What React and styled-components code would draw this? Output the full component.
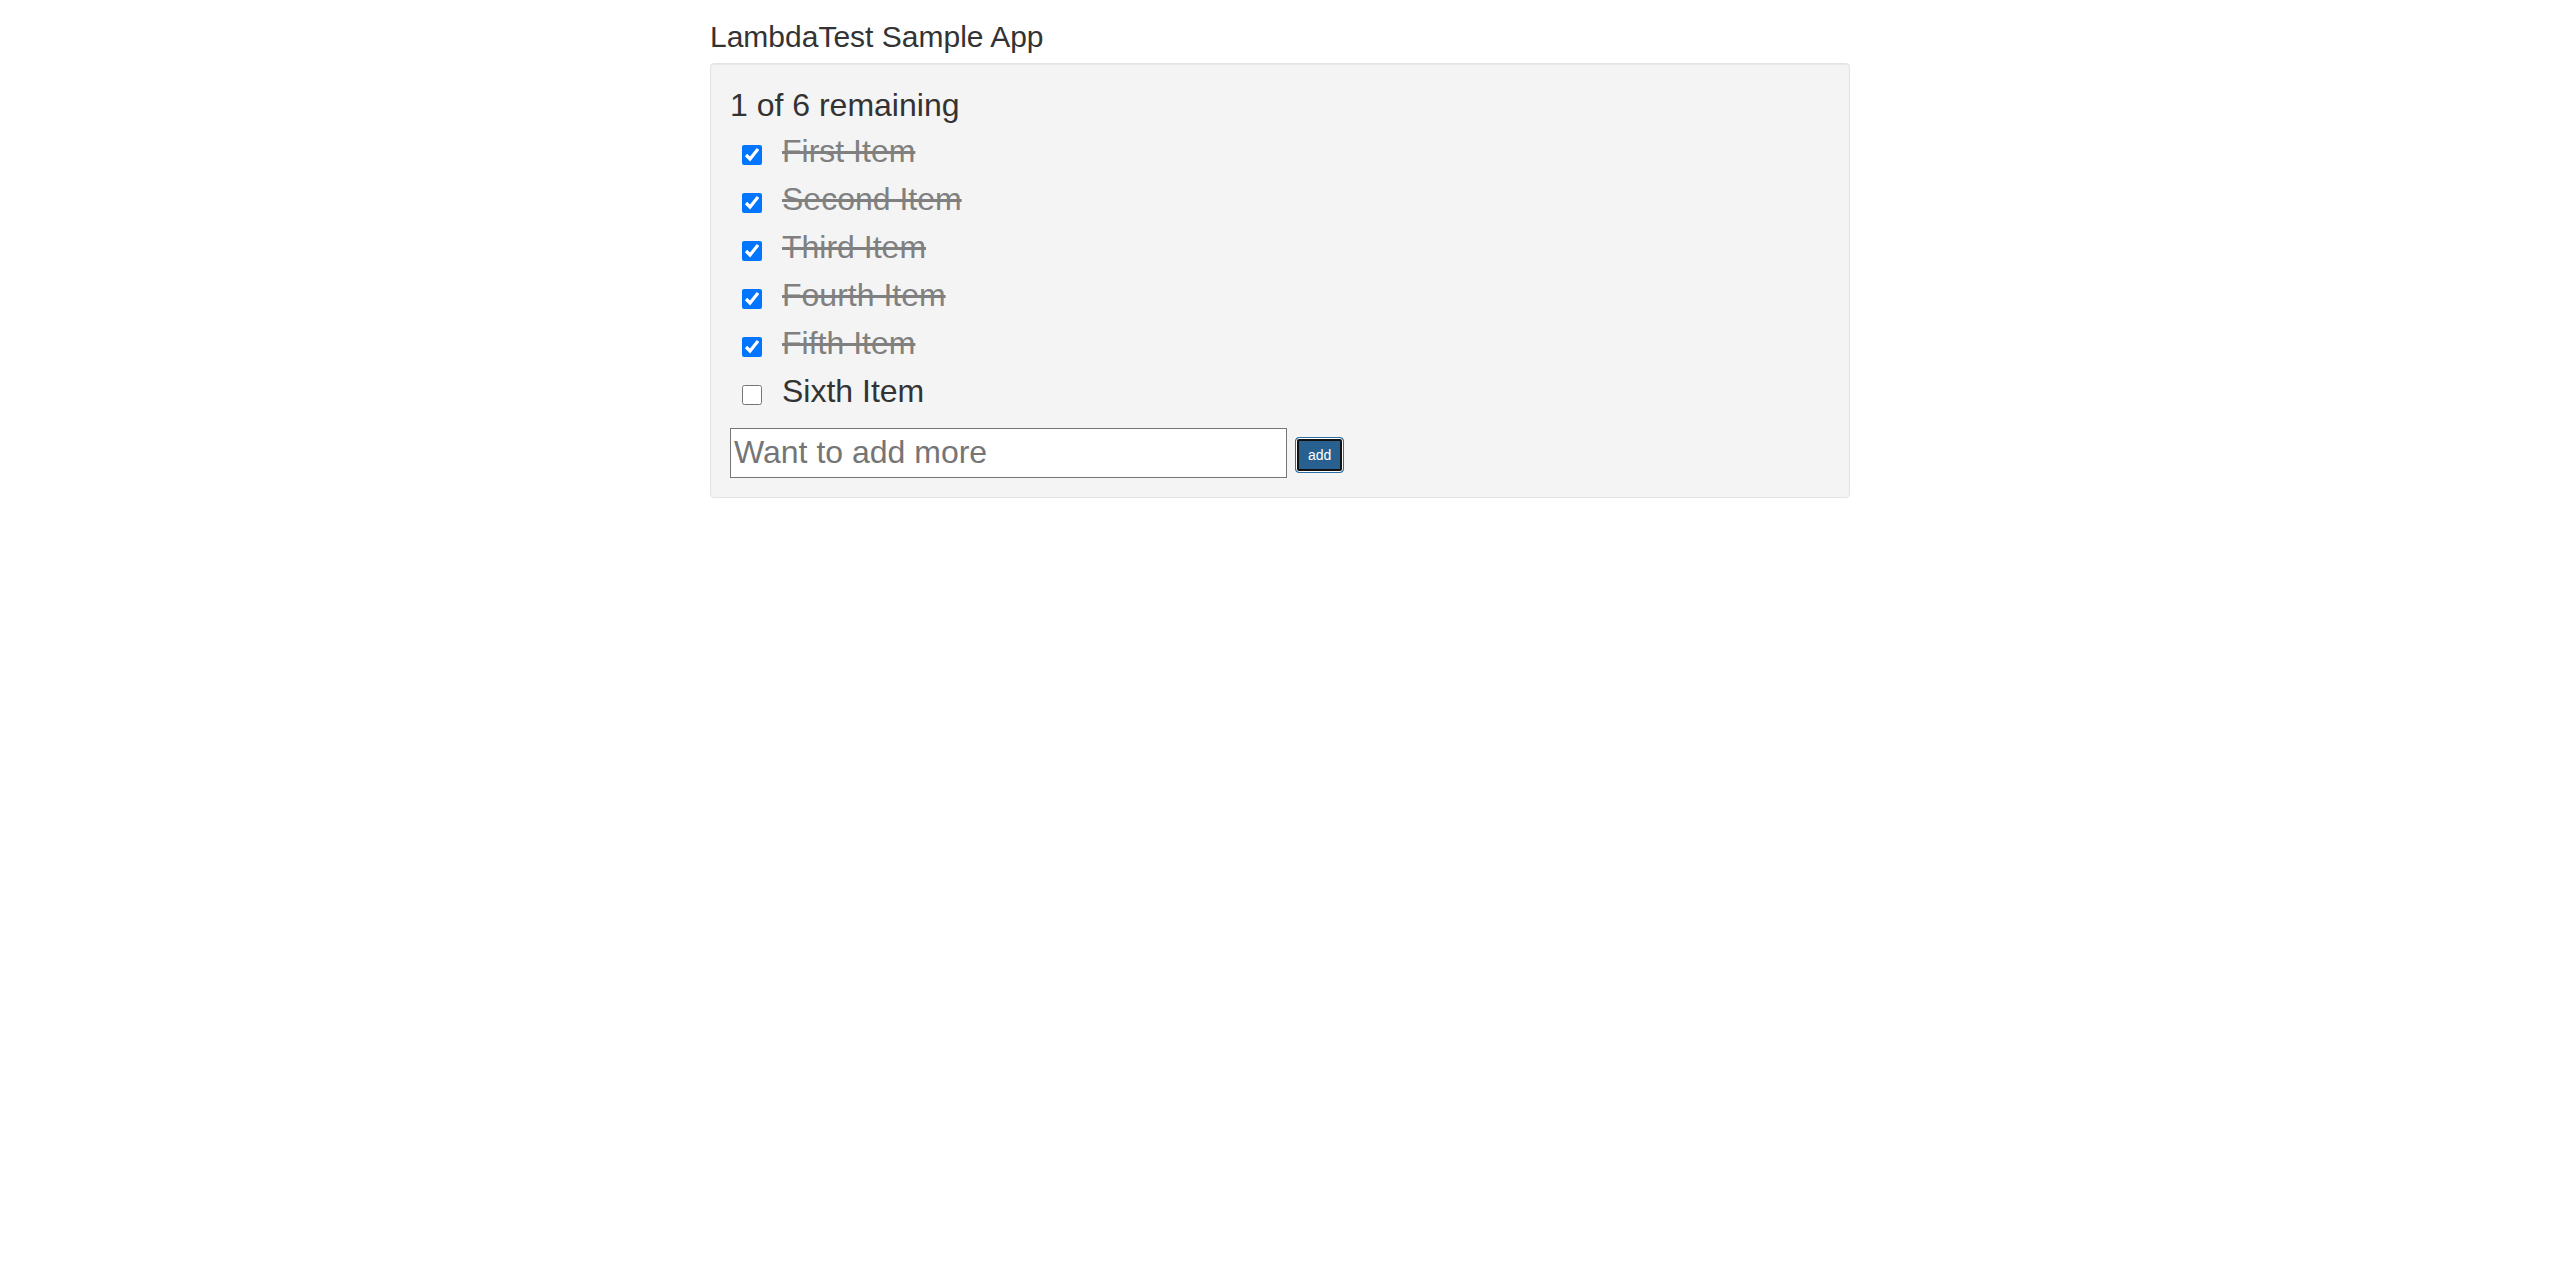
import React, { useState } from "react";
import styled, { createGlobalStyle } from "styled-components";

const GlobalStyle = createGlobalStyle`
  html, body {
    margin: 0;
    padding: 0;
    background: #ffffff;
  }
  body {
    font-family: "Liberation Sans", Arial, Helvetica, sans-serif;
    font-size: 14px;
    line-height: 1.42857143;
    color: #333333;
  }
  * {
    box-sizing: border-box;
  }
`;

const Container = styled.div`
  width: 1170px;
  padding: 0 15px;
  margin: 0 auto;
`;

const Title = styled.h2`
  margin: 20px 0 10px 0;
  font-size: 30px;
  font-weight: 500;
  line-height: 1.1;
  color: #333333;
`;

const Well = styled.div`
  min-height: 20px;
  padding: 19px;
  margin-bottom: 20px;
  background-color: #f4f4f4;
  border: 1px solid #e3e3e3;
  border-radius: 4px;
  box-shadow: inset 0 1px 1px rgba(0, 0, 0, 0.05);
`;

const Remaining = styled.div`
  font-size: 32px;
  line-height: 1.42857143;
`;

const List = styled.ul`
  list-style: none;
  margin: 0;
  padding: 0;
`;

const Row = styled.li`
  display: flex;
  align-items: center;
  height: 48px;
  font-size: 32px;
  line-height: 48px;
`;

const Check = styled.input`
  width: 20px;
  height: 20px;
  margin: 4px 20px 0 12px;
  accent-color: #0075ff;
`;

const Label = styled.span`
  padding-bottom: 3px;
  color: ${(p) => (p.$done ? "#808080" : "#333333")};
  text-decoration: ${(p) => (p.$done ? "line-through" : "none")};
`;

const Form = styled.form`
  display: flex;
  align-items: center;
  margin-top: 11px;
`;

const TextInput = styled.input`
  width: 557px;
  height: 50px;
  padding: 1px 3px;
  border: 1px solid #767676;
  border-radius: 0;
  background: #ffffff;
  font-family: "Liberation Sans", Arial, sans-serif;
  font-size: 32px;
  color: #333333;
  outline: none;

  &::placeholder {
    color: #757575;
  }
`;

const AddButton = styled.button`
  margin: 4px 0 0 8px;
  padding: 7px 12px;
  font-family: "Liberation Sans", Arial, sans-serif;
  font-size: 14px;
  line-height: 20px;
  color: #ffffff;
  background-color: #286090;
  border: 1px solid #2e6da4;
  border-radius: 4px;
  box-shadow: inset 0 0 0 1px #ffffff, inset 0 0 0 3px #111111;
  cursor: pointer;
`;

const initialTodos = [
  { text: "First Item", done: true },
  { text: "Second Item", done: true },
  { text: "Third Item", done: true },
  { text: "Fourth Item", done: true },
  { text: "Fifth Item", done: true },
  { text: "Sixth Item", done: false },
];

const App = () => {
  const [todos, setTodos] = useState(initialTodos);
  const [text, setText] = useState("");

  const toggle = (i) => {
    setTodos(todos.map((t, idx) => (idx === i ? { ...t, done: !t.done } : t)));
  };

  const onSubmit = (e) => {
    e.preventDefault();
    if (!text.trim()) return;
    setTodos([...todos, { text, done: false }]);
    setText("");
  };

  const remaining = todos.filter((t) => !t.done).length;

  return (
    <>
      <GlobalStyle />
      <Container>
        <Title>LambdaTest Sample App</Title>
        <Well>
          <Remaining>
            {remaining} of {todos.length} remaining
          </Remaining>
          <List>
            {todos.map((todo, i) => (
              <Row key={i}>
                <Check
                  type="checkbox"
                  checked={todo.done}
                  onChange={() => toggle(i)}
                />
                <Label $done={todo.done}>{todo.text}</Label>
              </Row>
            ))}
          </List>
          <Form onSubmit={onSubmit}>
            <TextInput
              type="text"
              placeholder="Want to add more"
              value={text}
              onChange={(e) => setText(e.target.value)}
            />
            <AddButton type="submit">add</AddButton>
          </Form>
        </Well>
      </Container>
    </>
  );
};

export default App;
